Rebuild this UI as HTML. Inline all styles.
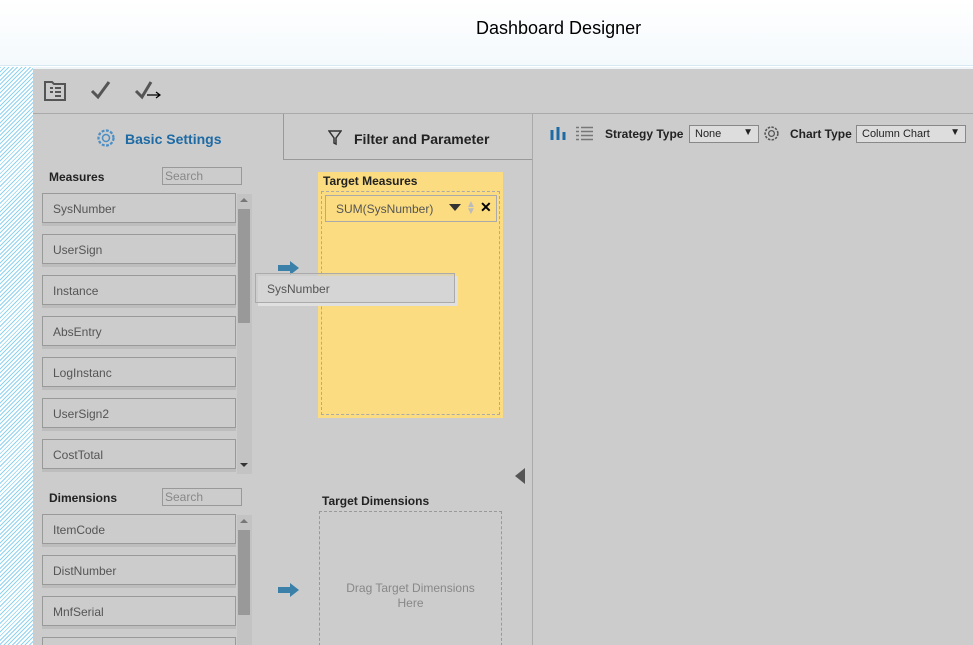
<!DOCTYPE html>
<html style="overflow:hidden;height:645px"><head><style>
*{margin:0;padding:0;box-sizing:border-box}
body{width:973px;height:645px;overflow:hidden;background:#fff;font-family:"Liberation Sans",sans-serif;position:relative}
.a{position:absolute}
.stripe{background:repeating-linear-gradient(135deg,#8fd3f0 0 1px,#fff 1px 3px)}
.item{position:absolute;left:42px;width:194px;height:30px;border:1px solid #999;background:#ccc;font-size:12px;color:#555;padding:8px 0 0 10px;box-shadow:0 3px 0 #bdbdbd}
.lbl{font-size:12px;font-weight:bold;color:#222}
.search{position:absolute;width:80px;height:18px;border:1px solid #999;font-size:12px;color:#888;padding:1px 2px}
.sb{position:absolute;left:237px;width:15px;background:#c3c3c3}
.sel{position:absolute;height:18px;border:1px solid #888;background:#ddd;font-size:11px;color:#222;padding:2px 5px}
</style></head><body>
<div class="a" style="left:0;top:0;width:973px;height:66px;background:linear-gradient(#fff,#f4f9fc);border-bottom:1px solid #d6e8f2"></div>
<div class="a" style="left:476px;top:18px;font-size:18px;color:#000">Dashboard Designer</div>
<div class="a stripe" style="left:0;top:67px;width:33px;height:578px"></div>
<div class="a" style="left:33px;top:67px;width:940px;height:2px;background:#eef4f7"></div>
<div class="a" style="left:33px;top:69px;width:940px;height:576px;background:#cccccc;overflow:hidden">
</div>
<!-- toolbar -->
<div class="a" style="left:33px;top:113px;width:940px;height:1px;background:#aaa"></div>
<svg class="a" style="left:44px;top:80px" width="24" height="22" viewBox="0 0 24 22"><path d="M1 2h7l2 2h11v16H1z" fill="none" stroke="#555" stroke-width="2"/><path d="M6 8h3M11 8h6M11 12h6M11 16h6M6 12h3" stroke="#555" stroke-width="2"/></svg>
<svg class="a" style="left:90px;top:80px" width="22" height="20"><path d="M2 11l6 6L19 2" fill="none" stroke="#555" stroke-width="3"/></svg>
<svg class="a" style="left:134px;top:80px" width="28" height="22"><path d="M2 11l6 6L17 2" fill="none" stroke="#555" stroke-width="3"/><path d="M13 15h13M22 12l4 3-4 3" fill="none" stroke="#000" stroke-width="1.2"/></svg>
<!-- tabs -->
<div class="a" style="left:283px;top:114px;width:250px;height:46px;border-left:1px solid #999;border-bottom:1px solid #999"></div>
<div class="a" style="left:532px;top:114px;width:1px;height:531px;background:#aaa"></div>
<svg class="a" style="left:96px;top:128px" width="20" height="20" viewBox="0 0 16 16"><circle cx="8" cy="8" r="6" fill="none" stroke="#4a8ec6" stroke-width="1.8" stroke-dasharray="2.3 1.2"/><circle cx="8" cy="8" r="2.8" fill="none" stroke="#4a8ec6" stroke-width="1.2"/></svg>
<div class="a" style="left:125px;top:131px;font-size:14px;font-weight:bold;color:#1d6aa5">Basic Settings</div>
<svg class="a" style="left:328px;top:130px" width="14" height="16"><path d="M1 1h12L8 8v6l-2-1V8z" fill="none" stroke="#333" stroke-width="1.5"/></svg>
<div class="a" style="left:354px;top:131px;font-size:14px;font-weight:bold;color:#222">Filter and Parameter</div>
<!-- measures -->
<div class="a lbl" style="left:49px;top:170px">Measures</div>
<div class="search" style="left:162px;top:167px">Search</div>
<div class="sb" style="top:194px;height:280px"></div>
<div class="a" style="left:238px;top:209px;width:12px;height:114px;background:#999"></div>
<div class="a" style="left:240px;top:198px;border:4px solid transparent;border-bottom-color:#777;border-top:0"></div>
<div class="a" style="left:240px;top:463px;border:4px solid transparent;border-top-color:#333;border-bottom:0"></div>
<div class="item" style="top:193px">SysNumber</div>
<div class="item" style="top:234px">UserSign</div>
<div class="item" style="top:275px">Instance</div>
<div class="item" style="top:316px">AbsEntry</div>
<div class="item" style="top:357px">LogInstanc</div>
<div class="item" style="top:398px">UserSign2</div>
<div class="item" style="top:439px">CostTotal</div>
<!-- dimensions -->
<div class="a lbl" style="left:49px;top:491px">Dimensions</div>
<div class="search" style="left:162px;top:488px">Search</div>
<div class="sb" style="top:515px;height:130px"></div>
<div class="a" style="left:238px;top:530px;width:12px;height:85px;background:#999"></div>
<div class="a" style="left:240px;top:519px;border:4px solid transparent;border-bottom-color:#777;border-top:0"></div>
<div class="item" style="top:514px">ItemCode</div>
<div class="item" style="top:555px">DistNumber</div>
<div class="item" style="top:596px">MnfSerial</div>
<div class="item" style="top:637px;height:8px;border-bottom:0;box-shadow:none"></div>
<!-- target measures -->
<div class="a" style="left:318px;top:172px;width:185px;height:246px;background:#fbdc80"></div>
<div class="a lbl" style="left:323px;top:174px">Target Measures</div>
<div class="a" style="left:321px;top:191px;width:179px;height:224px;border:1px dashed #aaa"></div>
<div class="a" style="left:325px;top:195px;width:172px;height:27px;border:1px solid #aaa;font-size:12px;color:#555;padding:6px 0 0 10px">SUM(SysNumber)</div>
<div class="a" style="left:449px;top:204px;border:6px solid transparent;border-top:7px solid #333;border-bottom:0"></div>
<div class="a" style="left:466px;top:201px;font-size:10px;color:#bbb;line-height:7px">▲<br>▼</div>
<div class="a" style="left:480px;top:199px;font-size:14px;font-weight:bold;color:#000">✕</div>
<!-- drag -->
<svg class="a" style="left:278px;top:261px" width="22" height="14"><path d="M0 4h12V0l9 7-9 7v-4H0z" fill="#3b80a8"/></svg>
<div class="a" style="left:258px;top:276px;width:200px;height:30px;background:#e0e0e0"></div>
<div class="a" style="left:255px;top:273px;width:200px;height:30px;border:1px solid #aaa;background:rgba(205,205,205,0.6);font-size:12px;color:#555;padding:8px 0 0 11px">SysNumber</div>
<!-- dims target -->
<div class="a lbl" style="left:322px;top:494px">Target Dimensions</div>
<div class="a" style="left:319px;top:511px;width:183px;height:140px;border:1px dashed #999"></div>
<div class="a" style="left:319px;top:581px;width:183px;text-align:center;font-size:12px;color:#888;line-height:15px">Drag Target Dimensions<br>Here</div>
<svg class="a" style="left:278px;top:583px" width="22" height="14"><path d="M0 4h12V0l9 7-9 7v-4H0z" fill="#3b80a8"/></svg>
<div class="a" style="left:515px;top:468px;border:8px solid transparent;border-right:10px solid #555;border-left:0"></div>
<!-- right -->
<svg class="a" style="left:550px;top:126px" width="16" height="15"><path d="M2 4v10M8 1v13M14 6v8" stroke="#1d6aa5" stroke-width="3"/></svg>
<svg class="a" style="left:576px;top:126px" width="17" height="15"><path d="M0 1.5h3M5 1.5h12M0 5.5h3M5 5.5h12M0 9.5h3M5 9.5h12M0 13.5h3M5 13.5h12" stroke="#777" stroke-width="1.4"/></svg>
<div class="a lbl" style="left:605px;top:127px">Strategy Type</div>
<div class="sel" style="left:689px;top:125px;width:70px">None<span style="position:absolute;right:5px;top:1px;font-size:10px">▼</span></div>
<svg class="a" style="left:763px;top:125px" width="17" height="17" viewBox="0 0 16 16"><circle cx="8" cy="8" r="6" fill="none" stroke="#555" stroke-width="1.5" stroke-dasharray="2.3 1.2"/><circle cx="8" cy="8" r="2.7" fill="none" stroke="#555" stroke-width="1.2"/></svg>
<div class="a lbl" style="left:790px;top:127px">Chart Type</div>
<div class="sel" style="left:856px;top:125px;width:110px">Column Chart<span style="position:absolute;right:5px;top:1px;font-size:10px">▼</span></div>
</body></html>
